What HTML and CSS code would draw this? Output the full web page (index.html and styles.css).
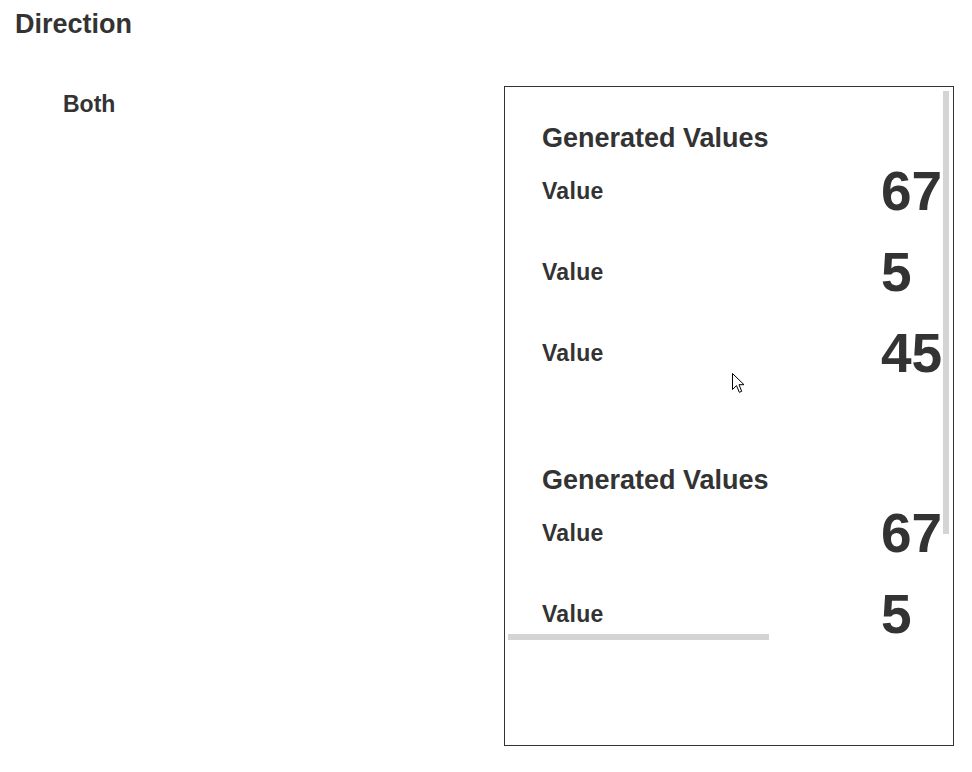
FILE: index.html
```html
<!DOCTYPE html>
<html lang="en">
<head>
<meta charset="utf-8">
<title>Direction</title>
<link rel="stylesheet" href="styles.css">
</head>
<body>
<main class="page">
  <h1 class="title">Direction</h1>
  <div class="demo">
    <div class="demo-label">Both</div>
    <div class="box">
      <div class="viewport">
        <div class="content">
          <section class="group">
            <h2 class="group-title">Generated Values</h2>
            <div class="row"><span class="row-label">Value</span><span class="row-num">67</span></div>
            <div class="row"><span class="row-label">Value</span><span class="row-num">5</span></div>
            <div class="row"><span class="row-label">Value</span><span class="row-num">45</span></div>
          </section>
          <section class="group">
            <h2 class="group-title">Generated Values</h2>
            <div class="row"><span class="row-label">Value</span><span class="row-num">67</span></div>
            <div class="row"><span class="row-label">Value</span><span class="row-num">5</span></div>
          </section>
        </div>
        <div class="thumb thumb-v"></div>
        <div class="thumb thumb-h"></div>
      </div>
    </div>
  </div>
  <svg class="cursor" width="13" height="21" viewBox="0 0 13 21" aria-hidden="true">
    <path d="M0.5 0.5 L0.5 16.5 L4.5 12.6 L7.3 19.3 L9.7 18.3 L7 11.7 L12 11.7 Z" fill="#fff" stroke="#000" stroke-width="1" stroke-linejoin="miter"/>
  </svg>
</main>
</body>
</html>
```

FILE: styles.css
```css
html, body {
  margin: 0;
  padding: 0;
  background: #fff;
}

.page {
  position: relative;
  width: 972px;
  height: 772px;
  padding-left: 15px;
  box-sizing: border-box;
  font-family: "Liberation Sans", Arial, sans-serif;
  font-weight: bold;
  color: #333;
}

.title {
  margin: 0;
  padding-top: 9px;
  font-size: 27px;
  line-height: 30px;
  font-weight: bold;
}

.demo {
  display: flex;
  margin-top: 47px;
}

.demo-label {
  width: 441px;
  padding-left: 48px;
  padding-top: 5px;
  font-size: 23px;
  line-height: 26px;
}

.box {
  width: 450px;
  height: 660px;
  box-sizing: border-box;
  border: 1px solid #333;
}

.viewport {
  position: relative;
  height: 556px;
  overflow: hidden;
}

.content {
  width: 760px;
  padding: 39px 0 0 37px;
}

.group {
  margin-bottom: 75px;
}

.group-title {
  margin: 0;
  font-size: 27px;
  line-height: 24px;
  font-weight: bold;
}

.row {
  display: flex;
  align-items: center;
  height: 81px;
}

.row-label {
  width: 339px;
  font-size: 23px;
  line-height: 26px;
  letter-spacing: 0.3px;
}

.row-num {
  font-size: 55px;
  line-height: 56px;
}

.thumb {
  position: absolute;
  background: #d4d4d4;
}

.thumb-v {
  top: 4px;
  right: 4px;
  width: 6px;
  height: 443px;
}

.thumb-h {
  left: 3px;
  bottom: 3px;
  width: 261px;
  height: 6px;
}

.cursor {
  position: absolute;
  left: 732px;
  top: 373px;
}
```
